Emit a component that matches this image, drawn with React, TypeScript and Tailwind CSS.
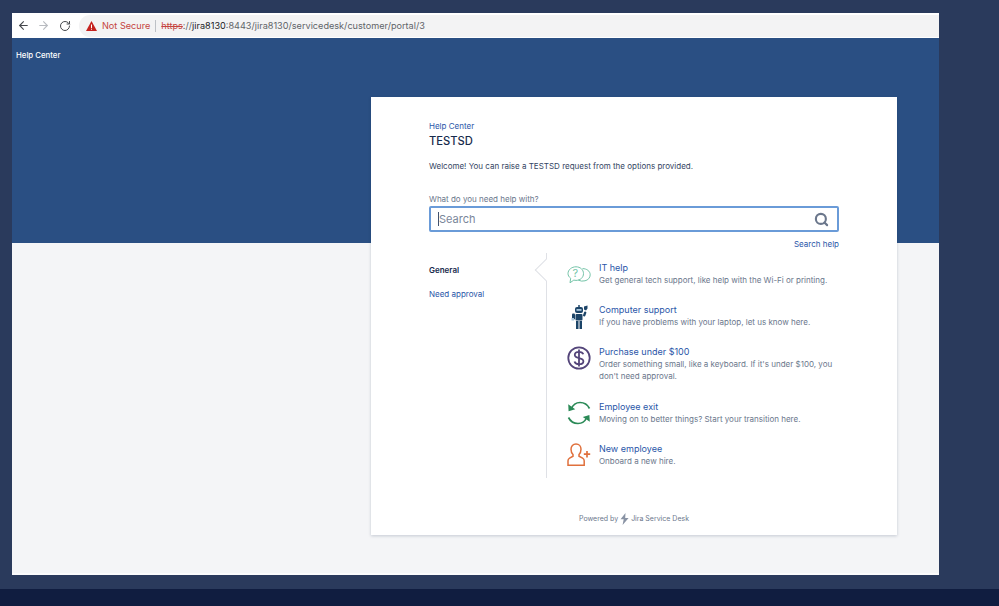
import { ReactNode } from "react";
import { ArrowLeft, ArrowRight, RotateCw, Search } from "lucide-react";

const FONT = "font-['Inter','Liberation_Sans',sans-serif]";

function ItHelpIcon() {
  return (
    <svg width="24" height="18" viewBox="0 0 24 18" fill="none" stroke="#74c4a8" strokeWidth="1">
      <path d="M9 .8c4.400 0 7.500 3 7.500 6.800s-3.100 6.800-7.500 6.800c-.8 0-1.500-.1-2.200-.3L3 16.800l.7-4.500C2 11 1 9.400 1 7.600 1 3.800 4.600.8 9 .8z" />
      <path d="M15.500 2.600c4.200 0 7.700 2.500 7.700 6.200 0 2.900-2.100 5.300-5.200 6l-3.500.3-3.200-1" />
      <text x="5.600" y="11.400" fontSize="11" fill="#74c4a8" stroke="none" fontFamily="Inter, sans-serif">?</text>
    </svg>
  );
}

function RobotIcon() {
  return (
    <svg width="17" height="24" viewBox="0 0 17 24" fill="#1c4468">
      <rect x="7" y="0" width="2" height="2" rx="1" />
      <rect x="4" y="2" width="8" height="6" rx="2" />
      <rect x="5.500" y="4" width="5" height="1.800" fill="#a8c6dc" />
      <rect x="4.500" y="9" width="7" height="6.500" rx="1" />
      <rect x="1" y="8.500" width="3" height="6" rx="1" />
      <rect x="0.500" y="13" width="2.500" height="2.500" fill="#a8c6dc" />
      <rect x="12.500" y="6.500" width="2.400" height="5" rx="1" transform="rotate(20 13.700 9)" />
      <path d="M13 1.500l3.500-1v3l-1.500 2-2-1z" />
      <rect x="5" y="16" width="2.500" height="8" />
      <rect x="8.500" y="16" width="2.500" height="8" />
    </svg>
  );
}

function DollarIcon() {
  return (
    <svg width="24" height="24" viewBox="0 0 24 24" fill="none" stroke="#54457a">
      <circle cx="12" cy="12" r="10.700" strokeWidth="1.800" />
      <path d="M16.300 8.300c-.6-1.700-2.300-2.500-4.300-2.500-2.400 0-4.200 1.200-4.200 3.100 0 4.300 8.600 2.100 8.600 6.300 0 1.900-1.900 3-4.400 3-2.200 0-4-1-4.500-2.800M12 3.500v17" strokeWidth="1.800" />
    </svg>
  );
}

function ExitIcon() {
  return (
    <svg width="24" height="24" viewBox="0 0 24 24" fill="none" stroke="#2b8a57" strokeWidth="1.700">
      <path d="M4.200 8C6 3.800 9 1.500 13 1.500c4.300 0 7.700 2.400 9.500 6" />
      <path d="M1.200 3.200 1.600 10.200l6.600-1.900z" fill="#2b8a57" stroke="none" />
      <path d="M19.800 16.500c-1.800 3.800-4.800 6-8.800 6-4.300 0-7.700-2.400-9.500-6" />
      <path d="M22.800 20.800 22.400 14l-6.600 1.900z" fill="#2b8a57" stroke="none" />
    </svg>
  );
}

function NewEmployeeIcon() {
  return (
    <svg width="24" height="24" viewBox="0 0 24 24" fill="none" stroke="#e0703c" strokeWidth="1.500">
      <path d="M9 1c3 0 5 2.200 5 5.200 0 2.200-.8 4.100-2 5.300v1.700l3.600 2c1 .6 1.600 1.500 1.600 2.600v4.400H1v-4.400c0-1.100.6-2 1.600-2.600l3.400-2v-1.700C4.800 10.300 4 8.400 4 6.200 4 3.200 6 1 9 1z" />
      <path d="M20 8v6.400M16.800 11.200h6.400" strokeWidth="1.700" />
    </svg>
  );
}

function JiraMark() {
  return (
    <svg width="9" height="12" viewBox="0 0 9 12" fill="#8993a4">
      <path d="M5.500 0 .5 6.200h3.200L2.600 12l6-7H5.200z" />
    </svg>
  );
}

interface RequestRowProps {
  icon: ReactNode;
  title: string;
  children: ReactNode;
  className: string;
}

function RequestRow({ icon, title, children, className }: RequestRowProps) {
  return (
    <div className={`flex ${className}`}>
      <div className="w-[32px] shrink-0">{icon}</div>
      <div>
        <div className="text-[9px] leading-[14px] text-[#2a56a8]">{title}</div>
        <div className="mt-[-1px] text-[8px] leading-[12px] text-[#6b778c]">{children}</div>
      </div>
    </div>
  );
}

export default function App() {
  return (
    <div className={`${FONT} flex h-[606px] w-[999px] flex-col overflow-hidden bg-[#2a3a5c]`}>
      <div className="h-[13px] shrink-0" />
      <div className="ml-[12px] flex h-[562px] w-[927px] shrink-0 flex-col border-b-2 border-[#fbfbfc] bg-[#f4f5f7]">
        <div className="flex h-[25px] shrink-0 items-center bg-white pl-[5px] text-[#45484c]">
          <ArrowLeft size={13} strokeWidth={2} />
          <ArrowRight size={13} strokeWidth={2} className="ml-[7px] text-[#b8bbc0]" />
          <RotateCw size={12} strokeWidth={2} className="ml-[9px]" />
          <div className="ml-[8px] flex h-[22px] flex-1 items-center rounded-l-full bg-[#f3f3f4] pl-[7px] text-[9.150px]">
            <svg width="11" height="10" viewBox="0 0 11 10" fill="#c5221f">
              <path d="M5.500 0 11 10H0z" />
              <rect x="5" y="3.500" width="1" height="3.500" fill="#fff" />
              <rect x="5" y="7.700" width="1" height="1" fill="#fff" />
            </svg>
            <span className="ml-[5px] text-[#c5443f]">Not Secure</span>
            <span className="mx-[5px] h-[12px] w-px bg-[#bdc1c6]" />
            <span className="text-[#c5443f] line-through">https</span>
            <span className="text-[#5f6368]">://</span>
            <span className="text-[#202124]">jira8130</span>
            <span className="text-[#5f6368]">:8443/jira8130/servicedesk/customer/portal/3</span>
          </div>
        </div>

        <div className="h-[205px] shrink-0 bg-[#2a4f83] pl-[4px] pt-[12px] text-[7.800px] leading-[11px] font-medium text-white">
          Help Center
        </div>

        <div className="ml-[359px] mt-[-146px] flex h-[438px] w-[526px] flex-col bg-white px-[58px] pt-[24px] shadow-[0_1px_3px_rgba(9,30,66,0.2)]">
          <div className="text-[8px] leading-[11px] text-[#2a56a8]">Help Center</div>
          <div className="mt-[1px] text-[11.200px] leading-[17px] font-medium text-[#172b4d]">TESTSD</div>
          <div className="mt-[11px] text-[8px] leading-[11px] text-[#344563]">
            Welcome! You can raise a TESTSD request from the options provided.
          </div>
          <div className="mt-[21px] text-[8px] leading-[12px] text-[#6b778c]">What do you need help with?</div>
          <div className="mt-[1px] flex h-[26px] items-center justify-between rounded-[2px] border-2 border-[#6a9bd8] pl-[7px] pr-[8px]">
            <span className="border-l border-[#42526e] text-[11px] leading-[14px] text-[#7a869a]">Search</span>
            <Search size={15} strokeWidth={3.400} className="text-[#6b778c]" />
          </div>
          <div className="mt-[6px] text-right text-[8px] leading-[12px] text-[#2a56a8]">Search help</div>

          <div className="mt-[3px] flex">
            <div className="w-[117px] shrink-0 pt-[12px]">
              <div className="text-[8px] leading-[11px] font-semibold text-[#172b4d]">General</div>
              <div className="mt-[13px] text-[8px] leading-[11px] text-[#2a56a8]">Need approval</div>
            </div>
            <div className="relative h-[225px] w-[21px] shrink-0 border-l border-[#dfe1e6]">
              <div className="absolute top-[9px] left-[-9px] h-[16px] w-[16px] rotate-45 border-b border-l border-[#dfe1e6] bg-white" />
            </div>
            <div className="flex-1 pt-[8px]">
              <RequestRow icon={<div className="pt-[5px]"><ItHelpIcon /></div>} title="IT help" className="h-[42px]">
                Get general tech support, like help with the Wi-Fi or printing.
              </RequestRow>
              <RequestRow icon={<div className="pl-[4px] pt-[2px]"><RobotIcon /></div>} title="Computer support" className="h-[42px]">
                If you have problems with your laptop, let us know here.
              </RequestRow>
              <RequestRow icon={<div className="pt-[1px]"><DollarIcon /></div>} title="Purchase under $100" className="h-[55px]">
                Order something small, like a keyboard. If it's under $100, you
                <br />
                don't need approval.
              </RequestRow>
              <RequestRow icon={<div className="pt-[1px]"><ExitIcon /></div>} title="Employee exit" className="h-[42px]">
                Moving on to better things? Start your transition here.
              </RequestRow>
              <RequestRow icon={<div className="pt-[1px]"><NewEmployeeIcon /></div>} title="New employee" className="h-[40px]">
                Onboard a new hire.
              </RequestRow>
            </div>
          </div>

          <div className="mt-[31px] flex items-center justify-center gap-[2px] text-[7px] leading-[12px] text-[#6b778c]">
            Powered by <JiraMark /> Jira Service Desk
          </div>
        </div>
      </div>
      <div className="h-[14px] shrink-0" />
      <div className="flex-1 bg-[#101d40]" />
    </div>
  );
}
